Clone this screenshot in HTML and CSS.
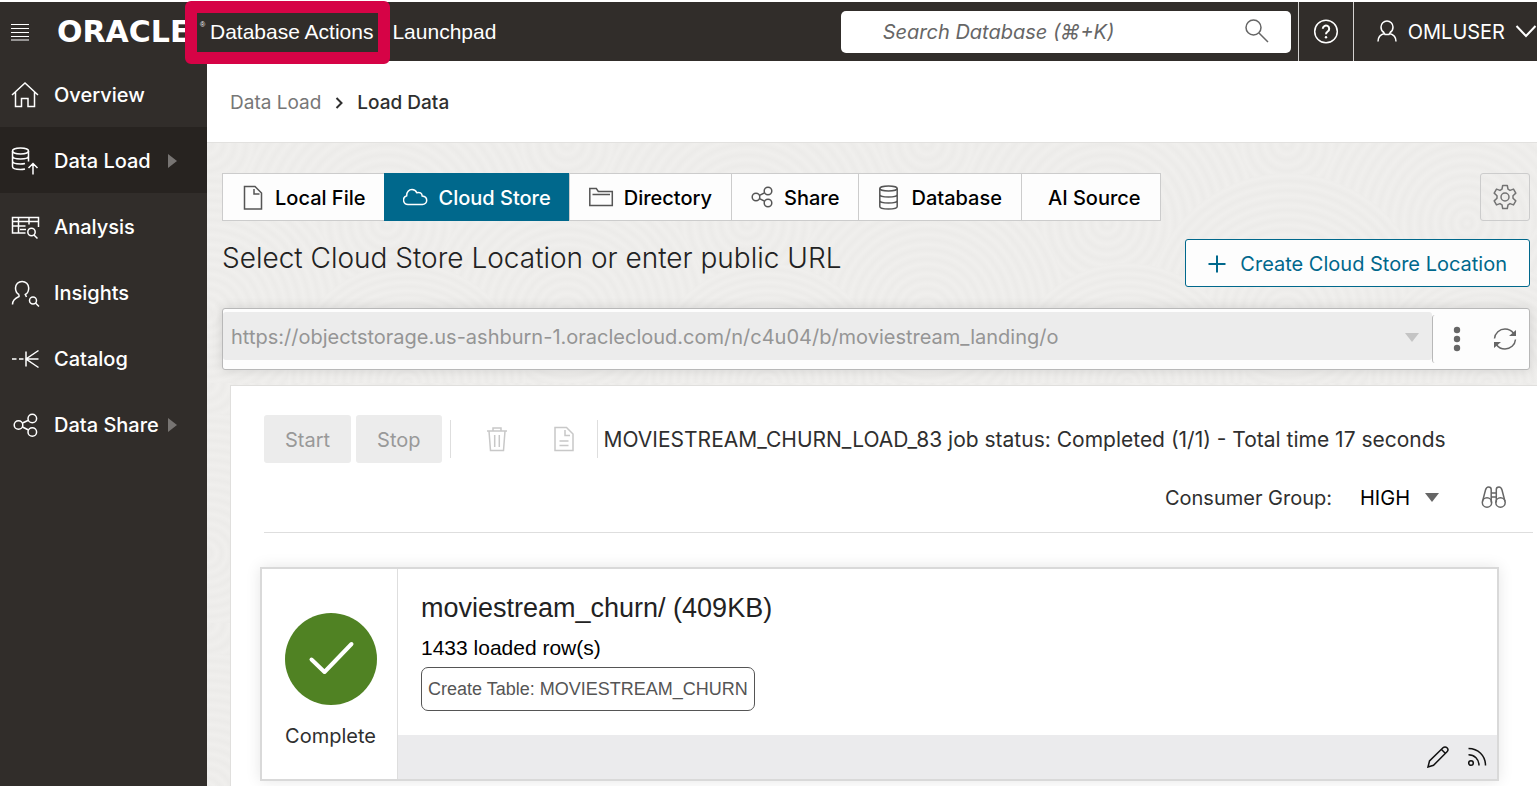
FILE: index.html
```html
<!DOCTYPE html>
<html lang="en">
<head>
<meta charset="utf-8">
<title>Oracle Database Actions | Load Data</title>
<link rel="stylesheet" href="styles.css">
</head>
<body>
<header class="topbar">
  <button class="icon-button menu-button" aria-label="Menu"><svg width="20" height="18" viewBox="0 0 20 18"><path d="M1 1.500h18M1 5.500h18M1 9.500h18M1 13.500h18M1 17h18"/></svg></button>
  <span class="logo">ORACLE</span>
  <div class="product">
    <span class="registered">®</span>
    <span class="product-name">Database Actions<span class="highlight"></span></span>
    <a class="launchpad" href="#">Launchpad</a>
  </div>
  <div class="search">
    <input class="search-input" type="search" aria-label="Search Database" placeholder="Search Database (⌘+K)">
    <svg width="26" height="26" viewBox="0 0 26 26"><circle cx="10.500" cy="8.500" r="7.500"/><path d="M16 14l9 9"/></svg>
  </div>
  <button class="icon-button help-button" aria-label="Help"><svg width="26" height="26" viewBox="0 0 26 26"><circle cx="13" cy="12.500" r="11.300"/><path class="bold" d="M9.800 9.800a3.200 3.200 0 1 1 4.900 2.700c-1.200.8-1.700 1.300-1.700 2.700"/><circle class="dot" cx="13" cy="18.200" r="1.200"/></svg></button>
  <button class="user-button">
    <svg width="22" height="24" viewBox="0 0 22 24"><path d="M8 12.500c-2-1-3-3.200-3-5.500a6 6 0 0 1 12 0c0 2.300-1 4.500-3 5.500M8 12.500l1 2h4l1-2M8.500 13.500c-4 1-6.500 3.500-6.500 8M13.500 13.500c4 1 6.500 3.500 6.500 8"/></svg>
    <span>OMLUSER</span>
    <svg width="22" height="14" viewBox="0 0 22 14"><path class="bold" d="M1.500 1l9.500 10 9.500-10"/></svg>
  </button>
</header>
<div class="layout">
  <nav class="sidebar">
    <a class="nav-item" href="#"><svg width="30" height="30" viewBox="0 0 30 30"><path d="M2 15L15 3l13 12M5.500 12v14.500h6v-8h6.500v8h6.500V12"/></svg>Overview</a>
    <a class="nav-item active" href="#"><svg width="30" height="30" viewBox="0 0 30 30"><ellipse cx="10.500" cy="5" rx="8" ry="3"/><path d="M2.500 5v15.500c0 1.800 3.500 3 8 3 1.600 0 3.200-.2 4.500-.5M18.500 5v10.500M2.500 10c0 1.800 3.500 3 8 3s8-1.200 8-3M2.500 15c0 1.800 3.500 3 8 3 1.600 0 3.200-.2 4.500-.5M23 28.500V18M18.500 22l4.500-4.500 4.500 4.500"/></svg>Data Load<svg class="caret" width="9" height="14" viewBox="0 0 9 14"><path d="M0 0l9 7-9 7z"/></svg></a>
    <a class="nav-item" href="#"><svg width="30" height="30" viewBox="0 0 30 30"><path d="M15.500 21H2.500V5.500h26V15M2.500 9.500h26M8.500 5.500V21M19 5.500v7M2.500 14h13M10 17.500h6"/><circle cx="21.500" cy="20" r="3.700"/><path d="M24 23l3.500 3.500"/></svg>Analysis</a>
    <a class="nav-item" href="#"><svg width="30" height="30" viewBox="0 0 30 30"><path d="M9 16.500c-2-1-3.500-4-3.500-6.500a6.600 6.600 0 0 1 13.200 0c0 2.500-1.400 5.500-3.400 6.500l1.200 2.500M9 16.500v2c-4 1.700-6.500 3.500-6.500 8"/><circle cx="23" cy="22.500" r="3.500"/><path d="M25.500 25l3.500 3.500"/></svg>Insights</a>
    <a class="nav-item" href="#"><svg width="30" height="30" viewBox="0 0 30 30"><path d="M2 15h4.500M9 15h4.500M16 7.500v15M28.500 6.500L16 15l12.500 8.500M16 15h12.500"/></svg>Catalog</a>
    <a class="nav-item" href="#"><svg width="30" height="30" viewBox="0 0 30 30"><circle cx="8.500" cy="15" r="4.300"/><circle cx="22.300" cy="8.500" r="4.300"/><circle cx="22.300" cy="22" r="4.300"/><path d="M12.500 13l6-2.700M12.500 17l6 3"/></svg>Data Share<svg class="caret" width="9" height="14" viewBox="0 0 9 14"><path d="M0 0l9 7-9 7z"/></svg></a>
  </nav>
  <div class="main">
    <nav class="breadcrumb" aria-label="Breadcrumb">
      <a class="crumb" href="#">Data Load</a>
      <svg width="8" height="14" viewBox="0 0 8 14"><path d="M1.500 2l5 5-5 5"/></svg>
      <span class="crumb current">Load Data</span>
    </nav>
    <main class="workspace">
      <div class="tab-row">
        <div class="tabs">
          <button class="tab"><svg width="24" height="26" viewBox="0 0 24 26"><path d="M2.500 1.500H13l6.500 6.500v16H2.500zM12 4v5h5.500"/></svg>Local File</button>
          <button class="tab selected"><svg width="26" height="26" viewBox="0 0 26 26"><path d="M5 19.500a4.500 4.500 0 0 1-1.300-8.800C3.500 7 6 4.500 9 4.500c2.500 0 4 1.300 4.800 3.200 3-.9 5.200.5 5.400 3.300 2.800.3 4.500 2 4.500 4.300s-1.800 4.200-4.400 4.200z"/></svg>Cloud Store</button>
          <button class="tab"><svg width="26" height="26" viewBox="0 0 26 26"><path d="M.8 20.500V3.500h6.500l2 3h14v14zM3.500 9.500h17.500"/></svg>Directory</button>
          <button class="tab"><svg width="24" height="26" viewBox="0 0 24 26"><circle cx="5" cy="12" r="3.800"/><circle cx="17" cy="6" r="3.800"/><circle cx="17" cy="18" r="3.800"/><path d="M8.500 10.300l5-2.500M8.500 13.700l5 2.500"/></svg>Share</button>
          <button class="tab"><svg width="24" height="26" viewBox="0 0 24 26"><ellipse cx="10.500" cy="3.500" rx="8.700" ry="2.500"/><path d="M1.800 3.500v18c0 1.500 4 2.500 8.700 2.500s8.700-1 8.700-2.500v-18M1.800 9.500c0 1.500 4 2.500 8.700 2.500s8.700-1 8.700-2.500M1.800 15.500c0 1.500 4 2.500 8.700 2.500s8.700-1 8.700-2.500"/></svg>Database</button>
          <button class="tab plain">AI Source</button>
        </div>
        <button class="settings" aria-label="Settings"><svg width="26" height="26" viewBox="0 0 26 26"><circle cx="13" cy="13" r="4"/><path stroke-linejoin="round" d="M10.700 1.500h4.600l.7 3.700 2 1.200 3.500-1.300 2.300 4-2.800 2.600v2.600l2.800 2.600-2.300 4-3.500-1.300-2 1.200-.7 3.700h-4.600l-.7-3.700-2-1.200-3.500 1.300-2.300-4L5 14.300v-2.600L2.200 9.100l2.300-4L8 6.400l2-1.200z"/></svg></button>
      </div>
      <div class="title-row">
        <h1 class="title">Select Cloud Store Location or enter public URL</h1>
        <button class="create"><svg width="18" height="18" viewBox="0 0 18 18"><path d="M9 .5v17M.5 9h17"/></svg>Create Cloud Store Location</button>
      </div>
      <div class="location">
        <div class="location-field">
          <select class="location-select" aria-label="Cloud store location" disabled><option>https://objectstorage.us-ashburn-1.oraclecloud.com/n/c4u04/b/moviestream_landing/o</option></select>
          <svg class="caret" width="14" height="9" viewBox="0 0 14 9"><path d="M0 0h14l-7 9z"/></svg>
        </div>
        <div class="location-actions">
          <button class="icon-button" aria-label="More actions"><svg class="solid" width="8" height="26" viewBox="0 0 8 26"><circle cx="4" cy="4" r="3.200"/><circle cx="4" cy="13" r="3.200"/><circle cx="4" cy="22" r="3.200"/></svg></button>
          <button class="icon-button" aria-label="Refresh"><svg width="26" height="26" viewBox="0 0 26 26"><path d="M2.500 12.500C3 7 7.500 3 13 3c3.500 0 6.500 1.500 8.500 4.300M23.500 13.500C23 19 18.500 23 13 23c-3.500 0-6.500-1.500-8.500-4.300"/><path class="fill" d="M24 4v6h-7zM2 22v-6h7z"/></svg></button>
        </div>
      </div>
      <section class="panel">
        <div class="toolbar">
          <div class="job-buttons"><button class="job-button" disabled>Start</button><button class="job-button" disabled>Stop</button></div>
          <div class="job-icons">
            <button class="icon-button" aria-label="Delete" disabled><svg width="22" height="26" viewBox="0 0 22 26"><path d="M1 5h20M7 5V2h8v3M3 5l1.500 19.500h13L19 5M8.700 9v12M13.300 9v12"/></svg></button>
            <button class="icon-button" aria-label="Report" disabled><svg width="22" height="26" viewBox="0 0 22 26"><path d="M2 1.500h11.500L20 8v16.500H2zM12 4v5.500h5M6.500 15h9M6.500 19.500h9"/></svg></button>
          </div>
          <p class="status">MOVIESTREAM_CHURN_LOAD_83 job status: Completed (1/1) - Total time 17 seconds</p>
        </div>
        <div class="options">
          <label class="group-label" for="group">Consumer Group:</label>
          <div class="group-field"><select class="group-select" id="group"><option>HIGH</option></select><svg class="caret" width="14" height="9" viewBox="0 0 14 9"><path d="M0 0h14l-7 9z"/></svg></div>
          <button class="icon-button" aria-label="Find"><svg width="26" height="24" viewBox="0 0 26 24"><circle cx="6" cy="16.500" r="4.700"/><circle cx="19.500" cy="16.500" r="4.700"/><path d="M1.500 15.500L4.500 4c.7-2.500 1.500-3 3-3s2.700.8 2.700 2.500v13M24 15.500L21 4c-.7-2.500-1.500-3-3-3s-2.700.8-2.700 2.500v13M10.200 7h5M10.200 11h5"/></svg></button>
        </div>
        <article class="card">
          <div class="card-status">
            <svg width="92" height="92" viewBox="0 0 92 92"><circle cx="46" cy="46" r="46"/><path d="M26.500 46.500L39.500 59l27-28"/></svg>
            <span>Complete</span>
          </div>
          <div class="card-body">
            <div class="card-info">
              <h2 class="card-title">moviestream_churn/ (409KB)</h2>
              <p class="rows">1433 loaded row(s)</p>
              <span class="tag">Create Table: MOVIESTREAM_CHURN</span>
            </div>
            <footer class="card-footer">
              <button class="icon-button" aria-label="Edit"><svg width="22" height="22" viewBox="0 0 22 22"><path d="M1 21l1.500-6L16 1.800a2.700 2.700 0 0 1 4 4L6.500 19.300zM14.500 3.500l4 4"/></svg></button>
              <button class="icon-button" aria-label="Feed"><svg width="20" height="20" viewBox="0 0 20 20"><circle cx="4" cy="16" r="2.300"/><path d="M1.500 7.800c6 0 10.500 4.500 10.500 10.700M1.500 1.500c9.500 0 17 7 17 17"/></svg></button>
            </footer>
          </div>
        </article>
      </section>
    </main>
  </div>
</div>
</body>
</html>
```

FILE: styles.css
```css
:root {
  --ui: Inter, "DejaVu Sans", sans-serif;
  --helvetica: "Liberation Sans", Arial, sans-serif;
  --dark: #312d2a;
  --teal: #00688c;
}
* { box-sizing: border-box; }
body {
  margin: 0;
  height: 100vh;
  padding-top: 2px;
  display: flex;
  flex-direction: column;
  overflow: hidden;
  background: #fff;
  color: #2f2f2f;
  font: 20px/24px var(--ui);
}
button, input, select { font: inherit; color: inherit; }
button {
  display: flex;
  align-items: center;
  justify-content: center;
  padding: 0;
  border: 0;
  background: none;
}
a { color: inherit; text-decoration: none; }
h1, h2, p { margin: 0; font-weight: 400; }
select { appearance: none; border: 0; background: none; padding: 0; opacity: 1; }
svg { display: block; flex: none; fill: none; stroke: currentColor; stroke-width: 1.500; }
svg .bold { stroke-width: 2; }
svg .dot, svg .fill, svg.solid { fill: currentColor; stroke: none; }
.caret { fill: currentColor; stroke: none; }

.topbar {
  display: flex;
  align-items: center;
  flex: none;
  height: 59px;
  background: var(--dark);
  color: #fff;
}
.menu-button { margin-left: 10px; }
.menu-button svg { stroke-width: 1; }
.logo { width: 143px; margin-left: 27px; font: 700 30px/36px "DejaVu Sans", sans-serif; }
.product { display: flex; flex: 1; font: 21px/24px var(--helvetica); }
.registered { width: 10px; font-size: 7px; line-height: 10px; }
.product-name { position: relative; padding-right: 19px; }
.highlight {
  position: absolute;
  inset: -19px 2px -20px -25px;
  border: 12px solid #d60346;
  border-radius: 6px;
}
.search {
  display: flex;
  align-items: center;
  width: 450px;
  height: 42px;
  margin-right: 7px;
  padding: 0 22px 0 42px;
  border-radius: 5px;
  background: #fff;
  color: #666;
}
.search-input { flex: 1; min-width: 0; border: 0; padding: 0; outline: 0; background: none; font-style: italic; }
.search-input::placeholder { color: #666; }
.help-button { width: 55px; height: 100%; border-left: 1px solid #d4d2d0; }
.user-button { height: 100%; padding-left: 22px; gap: 10px; border-left: 1px solid #d4d2d0; overflow: hidden; }

.layout { display: flex; flex: 1; min-height: 0; }
.sidebar { flex: none; width: 207px; background: var(--dark); color: #fff; font-weight: 500; }
.nav-item { display: flex; align-items: center; height: 66px; padding: 2px 0 0 10px; }
.nav-item svg:first-child { margin-right: 14px; }
.nav-item.active { background: #272320; }
.nav-item .caret { margin-left: auto; margin-right: 30px; color: #777472; }

.main { display: flex; flex-direction: column; flex: 1; min-width: 0; }
.breadcrumb {
  display: flex;
  align-items: center;
  flex: none;
  height: 82px;
  padding: 2px 0 0 23px;
  gap: 14px;
  border-bottom: 1px solid #e2e1df;
  font-size: 19px;
  color: #2f2f2f;
}
.breadcrumb svg { stroke-width: 2; }
.crumb { color: #777; }
.crumb.current { color: #2f2f2f; font-weight: 500; }
.workspace {
  display: flex;
  flex-direction: column;
  flex: 1;
  min-height: 0;
  padding: 30px 0 0 15px;
  background: #efeeec url("data:image/svg+xml,%3Csvg xmlns='http://www.w3.org/2000/svg' width='360' height='240'%3E%3Cdefs%3E%3CradialGradient id='g' cx='.5' cy='.5' r='.035' spreadMethod='repeat'%3E%3Cstop offset='0' stop-color='%23f0efed'/%3E%3Cstop offset='.5' stop-color='%23ecebe9'/%3E%3Cstop offset='1' stop-color='%23f0efed'/%3E%3C/radialGradient%3E%3C/defs%3E%3Cg fill='url(%23g)'%3E%3Ccircle cx='0' cy='0' r='160'/%3E%3Ccircle cx='360' cy='0' r='160'/%3E%3Ccircle cx='180' cy='80' r='150'/%3E%3Ccircle cx='0' cy='170' r='140'/%3E%3Ccircle cx='360' cy='170' r='140'/%3E%3Ccircle cx='200' cy='240' r='120'/%3E%3C/g%3E%3C/svg%3E");
}
.tab-row, .title-row { display: flex; justify-content: space-between; padding-right: 7px; }
.tabs { display: flex; border: 1px solid #ccc; background: #fdfdfd; color: #000; font-weight: 500; }
.tab { height: 46px; padding: 2px 19px 0; gap: 9px; border-left: 1px solid #ccc; }
.tab:first-child { border-left: 0; }
.tab svg { color: #555; }
.tab.selected { height: 48px; margin: -1px 0; padding: 2px 18px 0; border-color: var(--teal); background: var(--teal); color: #fff; }
.tab.selected svg { color: #fff; }
.tab.plain { padding-left: 26px; }
.settings { width: 50px; height: 48px; border: 1px solid #ccc; border-radius: 3px; color: #737373; }
.title-row { margin-top: 18px; }
.title { font-size: 28px; line-height: 38px; font-weight: 300; color: #222; }
.create {
  height: 48px;
  padding: 2px 22px 0;
  gap: 14px;
  border: 1px solid var(--teal);
  border-radius: 3px;
  background: #fdfdfd;
  color: var(--teal);
}
.create svg { stroke-width: 2; }
.location {
  display: flex;
  flex: none;
  height: 62px;
  margin: 21px 7px 0 0;
  border: 1px solid #b8b8b8;
  border-radius: 3px;
  background: #fdfdfd;
  box-shadow: 0 0 12px rgba(0, 0, 0, .12);
}
.location-field {
  display: flex;
  align-items: center;
  flex: 1;
  height: 48px;
  margin-top: 3px;
  padding: 2px 13px 0 8px;
  border-radius: 3px;
  background: #ececec;
  color: #959595;
}
.location-field .caret { color: #c4c4c4; }
.location-select { flex: 1; min-width: 0; height: 46px; }
.location-actions {
  display: flex;
  justify-content: space-between;
  width: 97px;
  height: 48px;
  margin-top: 6px;
  padding: 0 11px 0 20px;
  border-left: 1px solid #b8b8b8;
  border-radius: 3px;
  color: #666;
}
.panel {
  flex: 1;
  min-height: 0;
  margin: 15px 0 0 8px;
  padding: 29px 4px 0 33px;
  border: solid #e0dfdd;
  border-width: 1px 0 0 1px;
  background: #fff;
}
.toolbar { display: flex; align-items: center; }
.job-buttons { display: flex; gap: 5px; margin-right: 8px; }
.job-button { height: 48px; padding: 2px 21px 0; border-radius: 3px; background: #ececec; color: #999; }
.job-icons {
  display: flex;
  height: 38px;
  padding: 0 22px 0 35px;
  gap: 45px;
  border: solid #dedede;
  border-width: 0 1px;
  color: #c8c8c8;
}
.status { padding: 2px 0 0 6px; font-size: 21px; white-space: nowrap; }
.options {
  display: flex;
  align-items: center;
  justify-content: flex-end;
  height: 70px;
  padding-right: 26px;
  border-bottom: 1px solid #dedede;
}
.group-label { margin-right: 28px; }
.group-field { display: flex; align-items: center; gap: 14px; margin-right: 42px; }
.group-select { color: #000; }
.group-field .caret, .options .icon-button { color: #666; }
.card {
  display: flex;
  height: 214px;
  margin: 34px 34px 0 -4px;
  border: 2px solid #d9d9d9;
  background: #fff;
  box-shadow: 0 0 14px rgba(0, 0, 0, .1);
}
.card-status {
  display: flex;
  flex-direction: column;
  align-items: center;
  width: 136px;
  padding: 44px 0 0 2px;
  gap: 19px;
  border-right: 1px solid #dedede;
}
.card-status circle { fill: #508223; stroke: none; }
.card-status path { stroke: #fff; stroke-width: 4; stroke-linecap: round; stroke-linejoin: round; }
.card-body { display: flex; flex-direction: column; flex: 1; font-family: var(--helvetica); }
.card-info { flex: 1; padding: 23px 23px 0; }
.card-title { font-size: 27px; line-height: 32px; color: #222; }
.rows { margin-top: 11px; font-size: 21px; line-height: 26px; color: #000; }
.tag {
  display: inline-block;
  margin-top: 6px;
  padding: 9px 6px;
  border: 1px solid #555;
  border-radius: 7px;
  font-size: 18px;
  color: #555;
}
.card-footer {
  display: flex;
  align-items: center;
  justify-content: flex-end;
  height: 44px;
  padding-right: 10px;
  gap: 18px;
  background: #ebebed;
  color: #111;
}
```
